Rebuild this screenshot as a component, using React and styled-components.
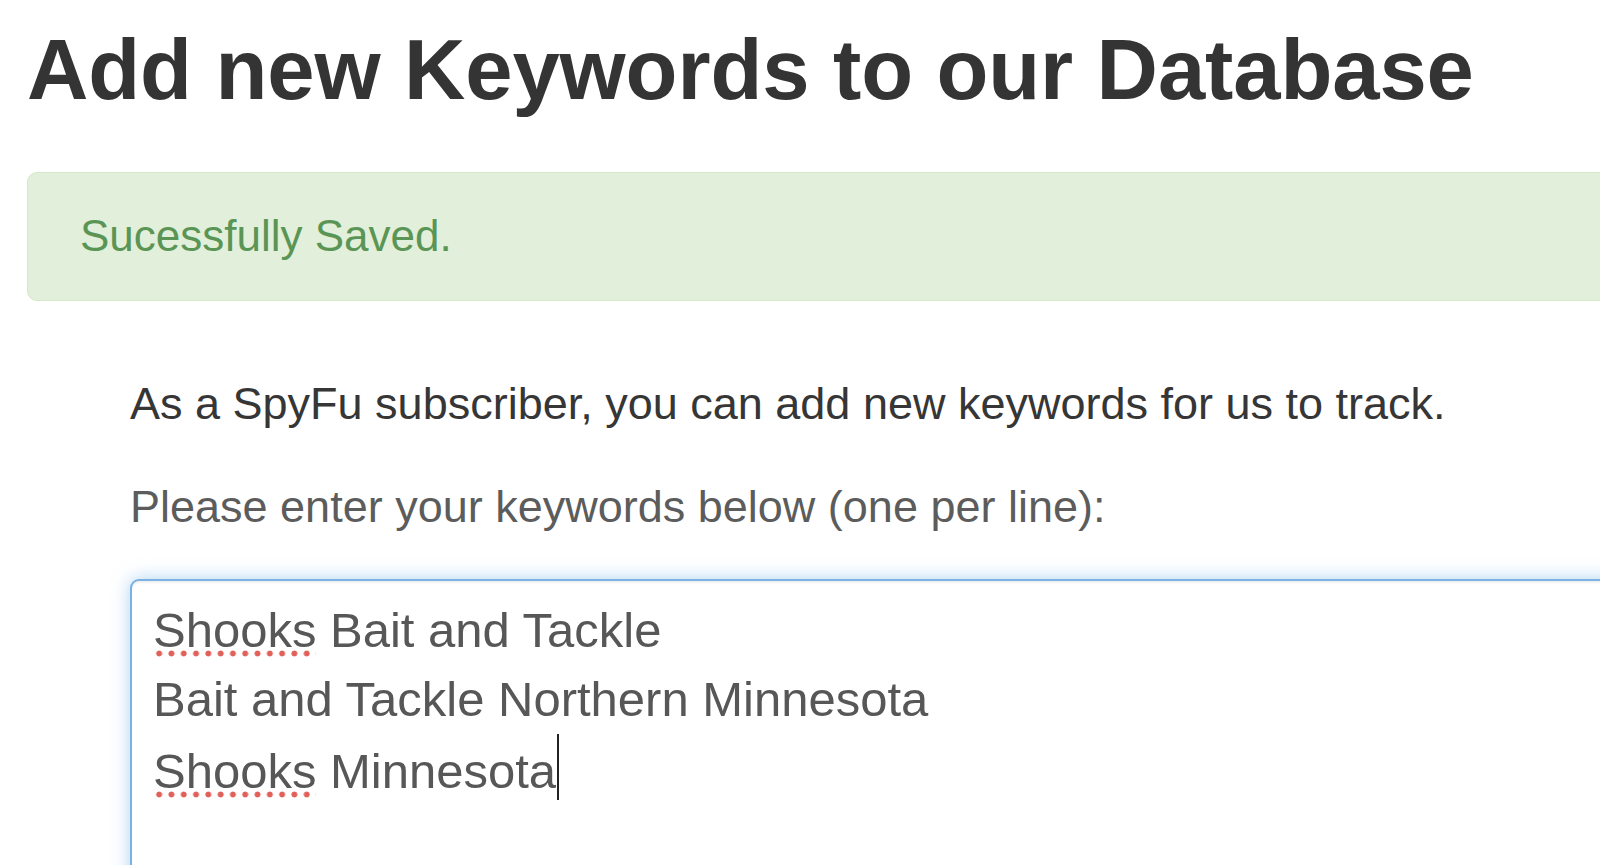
import React from 'react';
import styled, { createGlobalStyle } from 'styled-components';

const keywords = [
  [{ text: 'Shooks', wrong: true }, { text: ' Bait and Tackle' }],
  [{ text: 'Bait and Tackle Northern Minnesota' }],
  [{ text: 'Shooks', wrong: true }, { text: ' Minnesota' }],
];

const App = () => {
  return (
    <Page>
      <GlobalStyle />
      <Title>Add new Keywords to our Database</Title>
      <Alert>Sucessfully Saved.</Alert>
      <Form>
        <Intro>As a SpyFu subscriber, you can add new keywords for us to track.</Intro>
        <Label>Please enter your keywords below (one per line):</Label>
        <KeywordBox>
          {keywords.map((line, i) => (
            <Line key={i}>
              {line.map((part, j) =>
                part.wrong ? <Misspelled key={j}>{part.text}</Misspelled> : <span key={j}>{part.text}</span>
              )}
              {i === keywords.length - 1 && <Caret />}
            </Line>
          ))}
        </KeywordBox>
      </Form>
    </Page>
  );
};

const GlobalStyle = createGlobalStyle`
  html, body {
    margin: 0;
    padding: 0;
    background: #ffffff;
    overflow: hidden;
  }
  body {
    font-family: "Liberation Sans", Arial, Helvetica, sans-serif;
  }
`;

const Page = styled.div`
  width: 1700px;
  padding: 23px 0 0 27px;
  box-sizing: border-box;
  display: flex;
  flex-direction: column;

  & > * {
    flex-shrink: 0;
  }
`;

const Title = styled.h1`
  margin: 0;
  font-size: 85px;
  line-height: 1.1;
  font-weight: bold;
  color: #343434;
  letter-spacing: -0.1px;
`;

const Alert = styled.div`
  margin-top: 55px;
  height: 129px;
  box-sizing: border-box;
  padding: 0 52px;
  display: flex;
  align-items: center;
  background: #e2efda;
  border: 1px solid #d5e8c8;
  border-radius: 10px;
  color: #5a9556;
  font-size: 44px;
  line-height: 1.4;
`;

const Form = styled.div`
  display: flex;
  flex-direction: column;
  padding-left: 103px;
  margin-top: 71px;
`;

const Intro = styled.p`
  margin: 0;
  font-size: 45px;
  line-height: 64px;
  color: #363636;
`;

const Label = styled.p`
  margin: 39px 0 0;
  font-size: 45px;
  line-height: 64px;
  color: #5c5c5c;
`;

const KeywordBox = styled.div`
  margin-top: 40px;
  height: 420px;
  box-sizing: border-box;
  padding: 15px 21px;
  border: 2px solid #7cb1e4;
  border-radius: 9px;
  background: #ffffff;
  box-shadow: inset 0 2px 2px rgba(0, 0, 0, 0.06), 0 0 18px rgba(102, 175, 233, 0.55);
  font-size: 49px;
  line-height: 69px;
  color: #575757;
`;

const Line = styled.div`
  white-space: pre;
`;

const Misspelled = styled.span`
  background-image: radial-gradient(circle, #e2605a 2.6px, transparent 3.3px);
  background-size: 12.3px 7px;
  background-repeat: repeat-x;
  background-position: 0 100%;
`;

const Caret = styled.span`
  display: inline-block;
  width: 2px;
  height: 66px;
  margin-left: 1px;
  vertical-align: -12px;
  background: #222222;
`;

export default App;
